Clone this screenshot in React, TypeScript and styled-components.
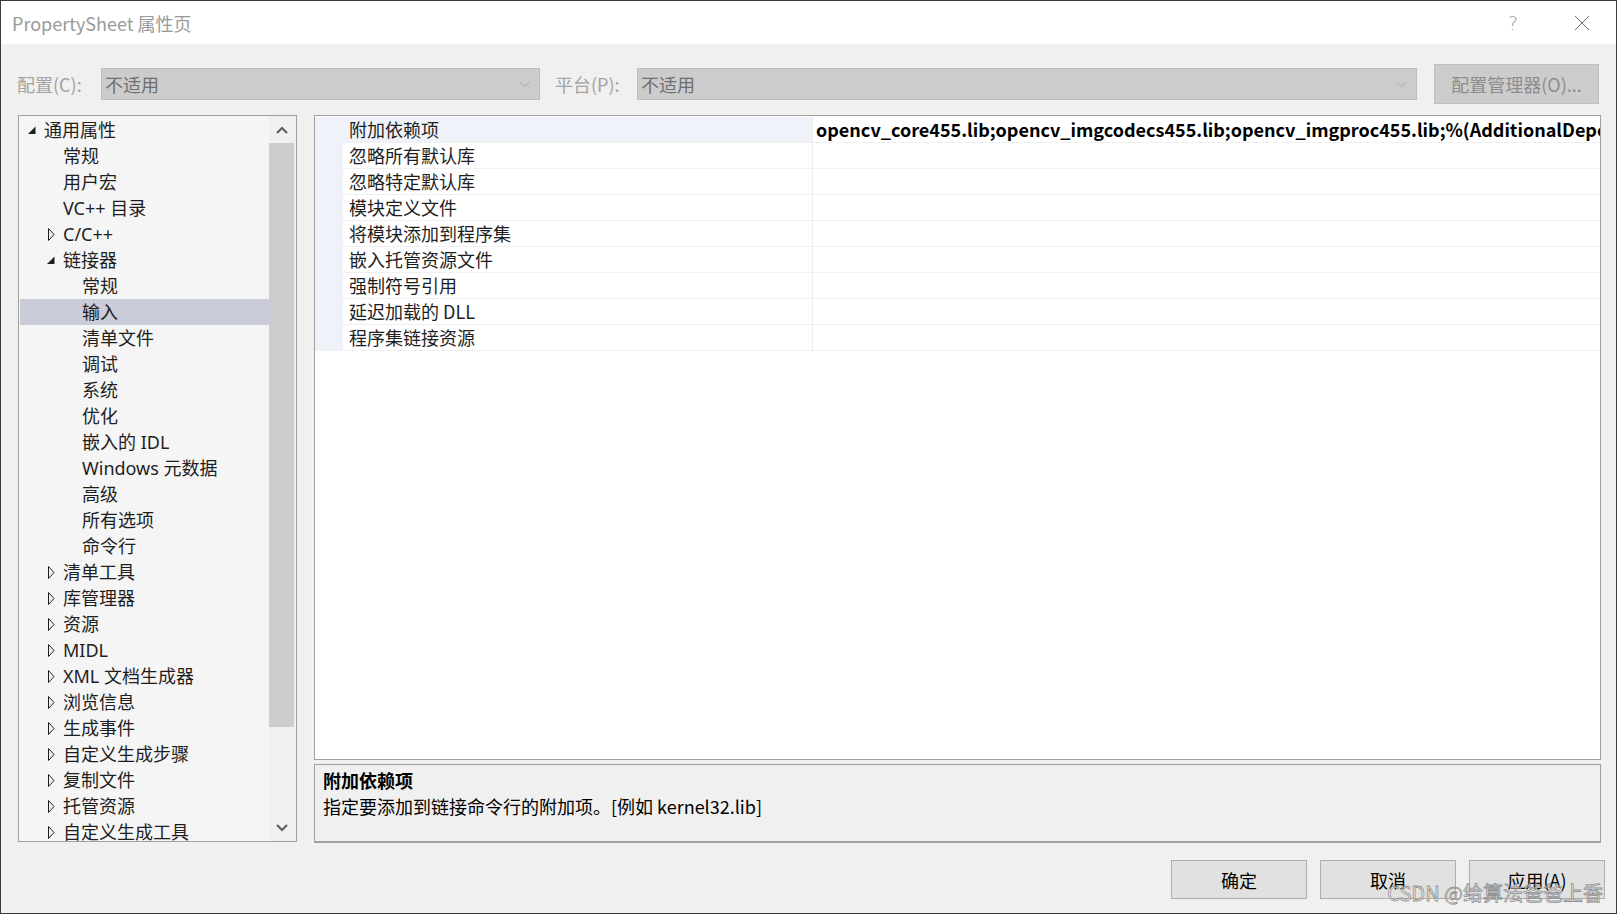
import React from "react";
import styled, { createGlobalStyle } from "styled-components";

const FONT = `"Microsoft YaHei UI", "Noto Sans CJK SC", "Noto Sans", sans-serif`;
const TREE_FONT = `"Noto Sans", "Noto Sans CJK SC", sans-serif`;

const Global = createGlobalStyle`
  html, body { margin: 0; padding: 0; background: #f0f0f0; }
  body { font-family: ${FONT}; }
  * { box-sizing: border-box; }
`;

const Window = styled.div`
  position: relative;
  width: 1617px;
  height: 914px;
  border: 1px solid #3a3a3a;
  background: #f0f0f0;
  display: flex;
  flex-direction: column;
  overflow: hidden;
  font-family: ${FONT};
`;

const TitleBar = styled.div`
  height: 43px;
  flex: none;
  background: #ffffff;
  display: flex;
  align-items: center;
  padding-left: 11px;
  padding-right: 26px;
`;

const TitleText = styled.div`
  font-size: 18px;
  color: #9a9a9a;
  line-height: 24px;
`;

const TitleButtons = styled.div`
  margin-left: auto;
  display: flex;
  align-items: center;
  gap: 56px;
`;

const HelpGlyph = styled.span`
  font-family: "DejaVu Sans", sans-serif;
  font-size: 19px;
  color: #a0a0a0;
  font-weight: 300;
  line-height: 20px;
`;

const ConfigRow = styled.div`
  flex: none;
  margin-top: 20px;
  height: 40px;
  display: flex;
  align-items: center;
  padding-left: 16px;
`;

const FieldLabel = styled.div<{ $w: number; $ml?: number }>`
  width: ${(p) => p.$w}px;
  margin-left: ${(p) => p.$ml ?? 0}px;
  font-size: 18px;
  color: #a3a3a3;
  line-height: 24px;
`;

const Combo = styled.div<{ $w: number }>`
  width: ${(p) => p.$w}px;
  height: 32px;
  background: #cccccc;
  border: 1px solid #bdbdbd;
  display: flex;
  align-items: center;
  padding: 0 9px 0 3px;
  font-size: 18px;
  color: #6f6f6f;
`;

const ComboValue = styled.span`
  flex: 1;
  line-height: 24px;
`;

const ManagerButton = styled.div`
  margin-left: 17px;
  width: 165px;
  height: 40px;
  background: #cccccc;
  border: 1px solid #bfbfbf;
  display: flex;
  align-items: center;
  justify-content: center;
  font-size: 18px;
  color: #8c8c8c;
`;

const Main = styled.div`
  flex: none;
  margin-top: 11px;
  height: 728px;
  display: flex;
  gap: 17px;
  padding-left: 17px;
`;

const TreePanel = styled.div`
  width: 279px;
  height: 727px;
  border: 1px solid #a0a0a0;
  background: #f5f5f5;
  display: flex;
`;

const TreeList = styled.div`
  width: 250px;
  padding: 1px 0 0 1px;
  overflow: hidden;
`;

const TreeRow = styled.div<{ $level: number; $selected?: boolean }>`
  height: 26px;
  display: flex;
  align-items: center;
  padding-left: ${(p) => 5 + p.$level * 19}px;
  background: ${(p) => (p.$selected ? "#cbccd9" : "transparent")};
  font-family: ${TREE_FONT};
  font-size: 18px;
  color: #1e1e1e;
  white-space: nowrap;
`;

const ToggleSlot = styled.span`
  width: 19px;
  height: 26px;
  flex: none;
  display: flex;
  align-items: center;
  padding-left: 2px;
`;

const TreeLabel = styled.span`
  line-height: 26px;
`;

const ScrollBar = styled.div`
  width: 27px;
  background: #f0f0f0;
  display: flex;
  flex-direction: column;
  padding-right: 2px;
`;

const ScrollArrow = styled.div<{ $h: number }>`
  height: ${(p) => p.$h}px;
  display: flex;
  align-items: center;
  justify-content: center;
`;

const ScrollThumb = styled.div`
  height: 584px;
  background: #cdcdcd;
`;

const ScrollTrack = styled.div`
  flex: 1;
`;

const RightColumn = styled.div`
  width: 1287px;
  display: flex;
  flex-direction: column;
  gap: 4px;
`;

const GridPanel = styled.div`
  height: 645px;
  border: 1px solid #a0a0a0;
  background: #ffffff;
  padding-top: 1px;
  overflow: hidden;
`;

const GridRow = styled.div`
  display: grid;
  grid-template-columns: 28px 470px 1fr;
  height: 26px;
`;

const Gutter = styled.div`
  background: #eff3f9;
`;

const NameCell = styled.div<{ $selected?: boolean }>`
  background: ${(p) => (p.$selected ? "#eff3f9" : "#ffffff")};
  border-bottom: 1px solid #f0f0f0;
  border-right: 1px solid #ececec;
  padding-left: 6px;
  font-size: 18px;
  color: #1e1e1e;
  line-height: 25px;
  white-space: nowrap;
`;

const ValueCell = styled.div`
  border-bottom: 1px solid #f0f0f0;
  padding-left: 3px;
  font-size: 18px;
  font-weight: 700;
  color: #000000;
  line-height: 25px;
  white-space: nowrap;
  overflow: hidden;
`;

const DescPanel = styled.div`
  height: 79px;
  border: 1px solid #a0a0a0;
  border-bottom: 2px solid #a0a0a0;
  background: #f0f0f0;
  padding: 2px 0 0 8px;
`;

const DescTitle = styled.div`
  font-size: 18px;
  font-weight: 700;
  line-height: 26px;
  color: #000;
`;

const DescText = styled.div`
  font-size: 18px;
  line-height: 26px;
  color: #000;
`;

const Footer = styled.div`
  flex: none;
  margin-top: 17px;
  display: flex;
  justify-content: flex-end;
  padding-right: 11px;
  gap: 13px;
`;

const DialogButton = styled.div`
  width: 136px;
  height: 39px;
  background: #e1e1e1;
  border: 1px solid #adadad;
  display: flex;
  align-items: center;
  justify-content: center;
  font-size: 18px;
  color: #000;
`;

const Watermark = styled.div`
  position: absolute;
  right: 13px;
  bottom: 7px;
  font-size: 20px;
  line-height: 26px;
  color: rgba(255, 255, 255, 0.55);
  -webkit-text-stroke: 0.8px rgba(125, 125, 125, 0.85);
  pointer-events: none;
  white-space: nowrap;
`;

const ChevronDown = ({ color = "#a8a8a8" }: { color?: string }) => (
  <svg width="11" height="7" viewBox="0 0 11 7">
    <polyline points="0.5,0.8 5.5,5.8 10.5,0.8" fill="none" stroke={color} strokeWidth="1" />
  </svg>
);

const ScrollChevron = ({ up }: { up?: boolean }) => (
  <svg width="12" height="8" viewBox="0 0 12 8">
    <polyline
      points={up ? "1,7 6,2 11,7" : "1,1 6,6 11,1"}
      fill="none"
      stroke="#606060"
      strokeWidth="2.2"
    />
  </svg>
);

const Toggle = ({ expanded }: { expanded: boolean }) =>
  expanded ? (
    <svg width="10" height="16" viewBox="0 0 10 16">
      <polygon points="8.5,4.5 8.5,12 1,12" fill="#1e1e1e" />
    </svg>
  ) : (
    <svg width="10" height="16" viewBox="0 0 10 16">
      <polygon points="2.5,2.5 8,8.5 2.5,14.5" fill="none" stroke="#1e1e1e" strokeWidth="1" />
    </svg>
  );

const CloseIcon = () => (
  <svg width="16" height="16" viewBox="0 0 16 16">
    <line x1="1" y1="1" x2="15" y2="15" stroke="#707070" strokeWidth="1" />
    <line x1="15" y1="1" x2="1" y2="15" stroke="#707070" strokeWidth="1" />
  </svg>
);

type TreeItem = { label: string; level: number; toggle?: "open" | "closed"; selected?: boolean };

const treeItems: TreeItem[] = [
  { label: "通用属性", level: 0, toggle: "open" },
  { label: "常规", level: 1 },
  { label: "用户宏", level: 1 },
  { label: "VC++ 目录", level: 1 },
  { label: "C/C++", level: 1, toggle: "closed" },
  { label: "链接器", level: 1, toggle: "open" },
  { label: "常规", level: 2 },
  { label: "输入", level: 2, selected: true },
  { label: "清单文件", level: 2 },
  { label: "调试", level: 2 },
  { label: "系统", level: 2 },
  { label: "优化", level: 2 },
  { label: "嵌入的 IDL", level: 2 },
  { label: "Windows 元数据", level: 2 },
  { label: "高级", level: 2 },
  { label: "所有选项", level: 2 },
  { label: "命令行", level: 2 },
  { label: "清单工具", level: 1, toggle: "closed" },
  { label: "库管理器", level: 1, toggle: "closed" },
  { label: "资源", level: 1, toggle: "closed" },
  { label: "MIDL", level: 1, toggle: "closed" },
  { label: "XML 文档生成器", level: 1, toggle: "closed" },
  { label: "浏览信息", level: 1, toggle: "closed" },
  { label: "生成事件", level: 1, toggle: "closed" },
  { label: "自定义生成步骤", level: 1, toggle: "closed" },
  { label: "复制文件", level: 1, toggle: "closed" },
  { label: "托管资源", level: 1, toggle: "closed" },
  { label: "自定义生成工具", level: 1, toggle: "closed" },
];

const properties: { name: string; value?: string; selected?: boolean }[] = [
  {
    name: "附加依赖项",
    value: "opencv_core455.lib;opencv_imgcodecs455.lib;opencv_imgproc455.lib;%(AdditionalDependencies)",
    selected: true,
  },
  { name: "忽略所有默认库" },
  { name: "忽略特定默认库" },
  { name: "模块定义文件" },
  { name: "将模块添加到程序集" },
  { name: "嵌入托管资源文件" },
  { name: "强制符号引用" },
  { name: "延迟加载的 DLL" },
  { name: "程序集链接资源" },
];

export default function App() {
  return (
    <>
      <Global />
      <Window>
        <TitleBar>
          <TitleText>PropertySheet 属性页</TitleText>
          <TitleButtons>
            <HelpGlyph>?</HelpGlyph>
            <CloseIcon />
          </TitleButtons>
        </TitleBar>

        <ConfigRow>
          <FieldLabel $w={84}>配置(C):</FieldLabel>
          <Combo $w={439}>
            <ComboValue>不适用</ComboValue>
            <ChevronDown />
          </Combo>
          <FieldLabel $w={82} $ml={15}>平台(P):</FieldLabel>
          <Combo $w={780}>
            <ComboValue>不适用</ComboValue>
            <ChevronDown />
          </Combo>
          <ManagerButton>配置管理器(O)...</ManagerButton>
        </ConfigRow>

        <Main>
          <TreePanel>
            <TreeList>
              {treeItems.map((it, i) => (
                <TreeRow key={i} $level={it.level} $selected={it.selected}>
                  <ToggleSlot>{it.toggle && <Toggle expanded={it.toggle === "open"} />}</ToggleSlot>
                  <TreeLabel>{it.label}</TreeLabel>
                </TreeRow>
              ))}
            </TreeList>
            <ScrollBar>
              <ScrollArrow $h={27}>
                <ScrollChevron up />
              </ScrollArrow>
              <ScrollThumb />
              <ScrollTrack />
              <ScrollArrow $h={26}>
                <ScrollChevron />
              </ScrollArrow>
            </ScrollBar>
          </TreePanel>

          <RightColumn>
            <GridPanel>
              {properties.map((p, i) => (
                <GridRow key={i}>
                  <Gutter />
                  <NameCell $selected={p.selected}>{p.name}</NameCell>
                  <ValueCell>{p.value ?? ""}</ValueCell>
                </GridRow>
              ))}
            </GridPanel>
            <DescPanel>
              <DescTitle>附加依赖项</DescTitle>
              <DescText>指定要添加到链接命令行的附加项。[例如 kernel32.lib]</DescText>
            </DescPanel>
          </RightColumn>
        </Main>

        <Footer>
          <DialogButton>确定</DialogButton>
          <DialogButton>取消</DialogButton>
          <DialogButton>应用(A)</DialogButton>
        </Footer>

        <Watermark>CSDN @给算法爸爸上香</Watermark>
      </Window>
    </>
  );
}
